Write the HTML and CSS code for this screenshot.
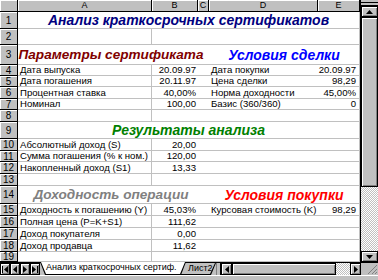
FILE: index.html
```html
<!DOCTYPE html>
<html lang="ru">
  <head>
    <meta charset="UTF-8" />
    <title>Анализ краткосрочных сертификатов</title>
    <link rel="stylesheet" href="styles.css">
  </head>

  <body>
    <div class="window">
      <div class="main">
        <div class="sheet">
          <div class="corner"></div>
          <div class="colhead">A</div>
          <div class="colhead">B</div>
          <div class="colhead">C</div>
          <div class="colhead">D</div>
          <div class="colhead">E</div>

          <div class="rowhead">1</div>
          <div class="cell all title navy">Анализ краткосрочных сертификатов</div>

          <div class="rowhead">2</div>
          <div class="cell a"></div><div class="cell"></div><div class="cell"></div><div class="cell"></div><div class="cell e"></div>

          <div class="rowhead">3</div>
          <div class="cell ab title maroon">Параметры сертификата</div>
          <div class="cell"></div>
          <div class="cell de title blue">Условия сделки</div>

          <div class="rowhead">4</div>
          <div class="cell a">Дата выпуска</div><div class="cell num">20.09.97</div><div class="cell"></div>
          <div class="cell">Дата покупки</div><div class="cell e num">20.09.97</div>

          <div class="rowhead">5</div>
          <div class="cell a">Дата погашения</div><div class="cell num">20.11.97</div><div class="cell"></div>
          <div class="cell">Цена сделки</div><div class="cell e num">98,29</div>

          <div class="rowhead">6</div>
          <div class="cell a">Процентная ставка</div><div class="cell num">40,00%</div><div class="cell"></div>
          <div class="cell">Норма доходности</div><div class="cell e num">45,00%</div>

          <div class="rowhead">7</div>
          <div class="cell a">Номинал</div><div class="cell num">100,00</div><div class="cell"></div>
          <div class="cell">Базис (360/360)</div><div class="cell e num">0</div>

          <div class="rowhead">8</div>
          <div class="cell a"></div><div class="cell"></div><div class="cell"></div><div class="cell"></div><div class="cell e"></div>

          <div class="rowhead">9</div>
          <div class="cell all title green">Результаты анализа</div>

          <div class="rowhead">10</div>
          <div class="cell a">Абсолютный доход (S)</div><div class="cell num">20,00</div><div class="cell"></div><div class="cell"></div><div class="cell e"></div>

          <div class="rowhead">11</div>
          <div class="cell a">Сумма погашения (% к ном.)</div><div class="cell num">120,00</div><div class="cell"></div><div class="cell"></div><div class="cell e"></div>

          <div class="rowhead">12</div>
          <div class="cell a">Накопленный доход (S1)</div><div class="cell num">13,33</div><div class="cell"></div><div class="cell"></div><div class="cell e"></div>

          <div class="rowhead">13</div>
          <div class="cell a"></div><div class="cell"></div><div class="cell"></div><div class="cell"></div><div class="cell e"></div>

          <div class="rowhead">14</div>
          <div class="cell ab title gray">Доходность операции</div>
          <div class="cell"></div>
          <div class="cell de title red">Условия покупки</div>

          <div class="rowhead">15</div>
          <div class="cell a">Доходность к погашению (Y)</div><div class="cell num">45,03%</div><div class="cell"></div>
          <div class="cell">Курсовая стоимость (K)</div><div class="cell e num">98,29</div>

          <div class="rowhead">16</div>
          <div class="cell a">Полная цена (P=K+S1)</div><div class="cell num">111,62</div><div class="cell"></div><div class="cell"></div><div class="cell e"></div>

          <div class="rowhead">17</div>
          <div class="cell a">Доход покупателя</div><div class="cell num">0,00</div><div class="cell"></div><div class="cell"></div><div class="cell e"></div>

          <div class="rowhead">18</div>
          <div class="cell a">Доход продавца</div><div class="cell num">11,62</div><div class="cell"></div><div class="cell"></div><div class="cell e"></div>

          <div class="rowhead">19</div>
          <div class="cell a"></div><div class="cell"></div><div class="cell"></div><div class="cell"></div><div class="cell e"></div>
        </div>

        <div class="vscroll">
          <div class="vsplit"></div>
          <div class="btn vbtn">
            <svg width="7" height="4" viewBox="0 0 7 4"><polygon points="3.5,0 7,4 0,4" fill="#000"/></svg>
          </div>
          <div class="vthumb"></div>
          <div class="track"></div>
          <div class="btn vbtn">
            <svg width="7" height="4" viewBox="0 0 7 4"><polygon points="0,0 7,0 3.5,4" fill="#000"/></svg>
          </div>
        </div>
      </div>

      <div class="tabbar">
        <div class="btn nav">
          <svg width="6" height="7" viewBox="0 0 6 7"><rect x="0" y="0" width="1" height="7" fill="#000"/><polygon points="6,0 6,7 2,3.5" fill="#000"/></svg>
        </div>
        <div class="btn nav">
          <svg width="4" height="7" viewBox="0 0 4 7"><polygon points="4,0 4,7 0,3.5" fill="#000"/></svg>
        </div>
        <div class="btn nav">
          <svg width="4" height="7" viewBox="0 0 4 7"><polygon points="0,0 0,7 4,3.5" fill="#000"/></svg>
        </div>
        <div class="btn nav">
          <svg width="6" height="7" viewBox="0 0 6 7"><polygon points="0,0 0,7 4,3.5" fill="#000"/><rect x="5" y="0" width="1" height="7" fill="#000"/></svg>
        </div>

        <div class="tab active"><span>Анализ краткосрочных сертиф.</span></div>
        <div class="tab other"><span>Лист2</span></div>
        <div class="hsplit"></div>

        <div class="btn hbtn">
          <svg width="4" height="7" viewBox="0 0 4 7"><polygon points="4,0 4,7 0,3.5" fill="#000"/></svg>
        </div>
        <div class="hthumb"></div>
        <div class="track htrack"></div>
        <div class="btn hbtn">
          <svg width="4" height="7" viewBox="0 0 4 7"><polygon points="0,0 0,7 4,3.5" fill="#000"/></svg>
        </div>
        <div class="grip">
          <svg width="12" height="12" viewBox="0 0 12 12">
            <line x1="11" y1="2" x2="2" y2="11" stroke="#808080"/>
            <line x1="11" y1="6" x2="6" y2="11" stroke="#808080"/>
            <line x1="11" y1="9" x2="9" y2="11" stroke="#808080"/>
          </svg>
        </div>
      </div>

      <div class="statusbar"></div>
    </div>
  </body>
</html>
```

FILE: styles.css
```css
* {
  box-sizing: border-box;
}

body {
  margin: 0;
  width: 378px;
  height: 280px;
  overflow: hidden;
  background-color: #c0c0c0;
  font: normal 10px "Liberation Sans", Arial, sans-serif;
  color: #000;
}

.window {
  display: flex;
  flex-direction: column;
  width: 378px;
  height: 280px;
}

.main {
  display: flex;
  height: 262px;
}

/* grid of the worksheet */
.sheet {
  display: grid;
  grid-template-columns: 18px 134px 46px 11px 109px 42px;
  grid-template-rows: 12px 17px 16px 20px 11px 11px 12px 11px 12px 17px 12px 11px 12px 12px 18px 12px 12px 12px 12px 10px;
  width: 360px;
  background-color: #fff;
  overflow: hidden;
}

.corner,
.colhead,
.rowhead {
  display: flex;
  align-items: center;
  justify-content: center;
  background-color: #c0c0c0;
  border-right: 1px solid #000;
  border-bottom: 1px solid #000;
  box-shadow: inset 1px 1px 0 #fff;
}

.colhead {
  font-size: 9px;
  line-height: 9px;
}

.rowhead {
  font-size: 10px;
}

.cell {
  display: flex;
  align-items: center;
  padding: 0 2px;
  white-space: nowrap;
  border-bottom: 1px solid #c0c0c0;
  font-size: 9.6px;
  line-height: 10px;
}

.cell.a {
  border-right: 1px solid #c0c0c0;
}

.cell.e {
  border-right: 1px solid #c0c0c0;
  padding-right: 3px;
}

.num {
  justify-content: flex-end;
}

.all {
  grid-column: span 5;
  border-right: 1px solid #c0c0c0;
}

.ab {
  grid-column: span 2;
}

.de {
  grid-column: span 2;
  border-right: 1px solid #c0c0c0;
}

.title {
  justify-content: center;
  font: italic bold 14px "Liberation Sans", Arial, sans-serif;
  line-height: 14px;
}

.cell.ab.title {
  font-size: 13.6px;
  padding-left: 8px;
}

.navy { color: #000080; }
.maroon { color: #800000; }
.blue { color: #0000ff; }
.green { color: #008000; }
.gray { color: #808080; }
.red { color: #ff0000; }

/* scroll bars */
.btn {
  display: flex;
  align-items: center;
  justify-content: center;
  background-color: #c0c0c0;
  border: 1px solid #000;
  box-shadow: inset 1px 1px 0 #fff, inset -1px -1px 0 #808080;
}

.vscroll {
  display: flex;
  flex-direction: column;
  width: 18px;
  border-left: 1px solid #000;
}

.vsplit {
  height: 6px;
  border-top: 2px solid #c0c0c0;
  border-bottom: 1px solid #000;
  box-shadow: inset 0 1px 0 #000;
}

.vbtn {
  height: 11px;
}

.vthumb {
  height: 170px;
  border: 1px solid #000;
  box-shadow: inset 1px 1px 0 #fff, inset -1px -1px 0 #808080;
}

.track {
  flex: 1;
  background: repeating-conic-gradient(#c0c0c0 0 25%, #fff 0 50%) 0 0 / 2px 2px;
}

.tabbar {
  display: flex;
  height: 13px;
  border-top: 1px solid #000;
}

.nav {
  width: 10px;
}

.tab {
  height: 12px;
  padding: 0 1px 1px;
  background-color: #000;
  clip-path: polygon(0 0, 100% 0, calc(100% - 5px) 100%, 5px 100%);
}

.tab span {
  display: block;
  height: 100%;
  padding: 0 5px;
  font-size: 9px;
  line-height: 11px;
  white-space: nowrap;
  overflow: hidden;
  clip-path: polygon(0 0, 100% 0, calc(100% - 5px) 100%, 5px 100%);
}

.tab.active {
  position: relative;
  z-index: 1;
  width: 146px;
  margin-top: -1px;
  height: 13px;
}

.tab.active span {
  background-color: #fff;
}

.tab.other {
  width: 42px;
  margin-left: -12px;
}

.tab.other span {
  background-color: #c0c0c0;
  padding: 0 1px 0 13px;
}

.hsplit {
  width: 5px;
  border-left: 1px solid #808080;
  border-right: 1px solid #000;
}

.hbtn {
  width: 11px;
}

.hthumb {
  width: 104px;
  border: 1px solid #000;
  box-shadow: inset 1px 1px 0 #fff, inset -1px -1px 0 #808080;
}

.htrack {
  flex: 1;
}

.grip {
  width: 17px;
  display: flex;
  align-items: flex-end;
  justify-content: flex-end;
  background-color: #c0c0c0;
}

.statusbar {
  height: 5px;
  border-top: 1px solid #fff;
  background-color: #c0c0c0;
}
```
